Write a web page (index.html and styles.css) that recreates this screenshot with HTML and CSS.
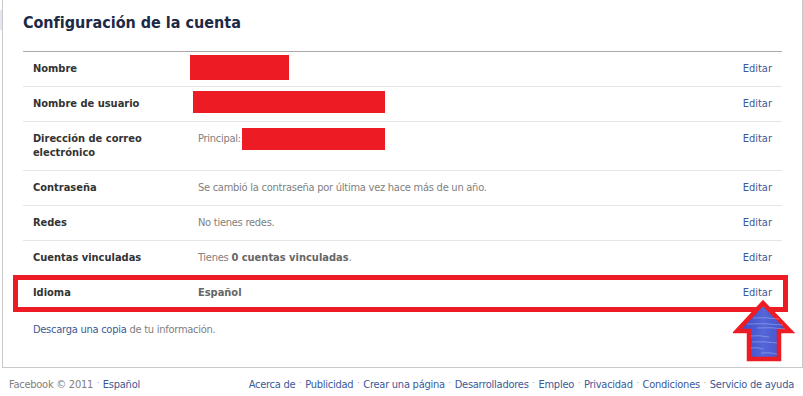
FILE: index.html
```html
<!DOCTYPE html>
<html lang="es">
<head>
<meta charset="utf-8">
<title>Configuración de la cuenta</title>
<link rel="stylesheet" href="styles.css">
</head>
<body>
<div class="layout">
  <div class="sidebar"><div class="sidebar-item"></div></div>
  <div class="panel">
    <h2 class="title">Configuración de la cuenta</h2>
    <div class="settings">
      <div class="row">
        <div class="label">Nombre</div>
        <div class="value"></div>
        <a class="edit" href="#">Editar</a>
        <span class="redact r1"></span>
      </div>
      <div class="row">
        <div class="label">Nombre de usuario</div>
        <div class="value"></div>
        <a class="edit" href="#">Editar</a>
        <span class="redact r2"></span>
      </div>
      <div class="row row-top">
        <div class="label">Dirección de correo<br>electrónico</div>
        <div class="value">Principal:</div>
        <a class="edit" href="#">Editar</a>
        <span class="redact r3"></span>
      </div>
      <div class="row">
        <div class="label">Contraseña</div>
        <div class="value">Se cambió la contraseña por última vez hace más de un año.</div>
        <a class="edit" href="#">Editar</a>
      </div>
      <div class="row">
        <div class="label">Redes</div>
        <div class="value">No tienes redes.</div>
        <a class="edit" href="#">Editar</a>
      </div>
      <div class="row">
        <div class="label">Cuentas vinculadas</div>
        <div class="value">Tienes <b>0 cuentas vinculadas</b>.</div>
        <a class="edit" href="#">Editar</a>
      </div>
      <div class="row row-last">
        <div class="label">Idioma</div>
        <div class="value"><b>Español</b></div>
        <a class="edit" href="#">Editar</a>
        <span class="highlight"></span>
        <svg class="arrow" width="62" height="68" viewBox="0 0 62 68" aria-hidden="true">
          <defs>
            <linearGradient id="ag" x1="0" y1="0" x2="1" y2="0">
              <stop offset="0" stop-color="#3546c6"/>
              <stop offset="0.5" stop-color="#5566d8"/>
              <stop offset="1" stop-color="#3a4bca"/>
            </linearGradient>
          </defs>
          <polygon points="30,6 57,34 46,34 46,62 16,62 16,34 4,34" fill="url(#ag)" stroke="#ed1c24" stroke-width="4.5" stroke-linejoin="miter"/>
          <g stroke="#ffffff" stroke-opacity="0.28" stroke-width="1" fill="none">
            <path d="M20 21 Q32 20 46 22"/>
            <path d="M14 27 Q30 26 50 28"/>
            <path d="M24 31 Q38 30 52 32"/>
            <path d="M18 39 Q26 38 36 40"/>
            <path d="M19 45 Q30 44 44 46"/>
            <path d="M18 51 Q24 50 30 52"/>
            <path d="M28 56 Q36 55 44 57"/>
          </g>
        </svg>
      </div>
    </div>
    <p class="download"><a href="#">Descarga una copia</a> de tu información.</p>
  </div>
</div>
<div class="footer">
  <div class="footer-left">Facebook © 2011 <span class="dot">·</span> <a href="#">Español</a></div>
  <div class="footer-right">
    <a href="#">Acerca de</a> <span class="dot">·</span>
    <a href="#">Publicidad</a> <span class="dot">·</span>
    <a href="#">Crear una página</a> <span class="dot">·</span>
    <a href="#">Desarrolladores</a> <span class="dot">·</span>
    <a href="#">Empleo</a> <span class="dot">·</span>
    <a href="#">Privacidad</a> <span class="dot">·</span>
    <a href="#">Condiciones</a> <span class="dot">·</span>
    <a href="#">Servicio de ayuda</a>
  </div>
</div>
</body>
</html>
```
FILE: styles.css
```css
html, body {
  margin: 0;
  padding: 0;
  background: #ffffff;
}
body {
  font-family: "DejaVu Sans", "Liberation Sans", sans-serif;
  font-stretch: condensed;
  font-size: 11px;
  color: #333333;
}
a {
  color: #3b5998;
  text-decoration: none;
}
.layout {
  display: flex;
  height: 368px;
}
.sidebar {
  width: 2px;
}
.sidebar-item {
  margin-top: 10px;
  height: 20px;
  background: #e3e8f0;
}
.panel {
  width: 798px;
  border: 1px solid #c9c9c9;
  border-top: none;
  padding: 0 20px;
}
.title {
  margin: 0;
  padding: 12px 0 17px;
  font-size: 16px;
  line-height: 22px;
  font-weight: bold;
  color: #1c2a47;
  border-bottom: 1px solid #aaaaaa;
}
.settings {
  display: flex;
  flex-direction: column;
}
.row {
  position: relative;
  display: flex;
  align-items: center;
  padding: 10px 10px;
  line-height: 14px;
  border-bottom: 1px solid #e5e5e5;
}
.row-top {
  align-items: flex-start;
}
.row-last {
  border-bottom: none;
}
.label {
  width: 165px;
  font-weight: bold;
  color: #333333;
}
.value {
  flex: 1;
  color: #808080;
  letter-spacing: -0.25px;
}
.value b {
  color: #666666;
  letter-spacing: 0;
}
.edit {
  margin-left: auto;
}
.redact {
  position: absolute;
  background: #ed1c24;
}
.r1 { left: 167px; top: 3px; width: 99px; height: 25px; }
.r2 { left: 170px; top: 4px; width: 192px; height: 22px; }
.r3 { left: 219px; top: 6px; width: 143px; height: 22px; }
.highlight {
  position: absolute;
  left: -10px;
  top: -1px;
  width: 765px;
  height: 27px;
  border: 5px solid #ed1c24;
}
.arrow {
  position: absolute;
  left: 710px;
  top: 21px;
}
.download {
  margin: 0;
  padding: 13px 10px 0;
  color: #808080;
  line-height: 14px;
  letter-spacing: -0.25px;
}
.footer {
  display: flex;
  justify-content: space-between;
  padding: 9px 9px 0 9px;
  line-height: 14px;
  color: #808080;
  letter-spacing: -0.25px;
}
.dot {
  display: inline-block;
  margin: 0 1px;
  font-size: 8px;
  vertical-align: 2px;
  color: #999999;
}
```
